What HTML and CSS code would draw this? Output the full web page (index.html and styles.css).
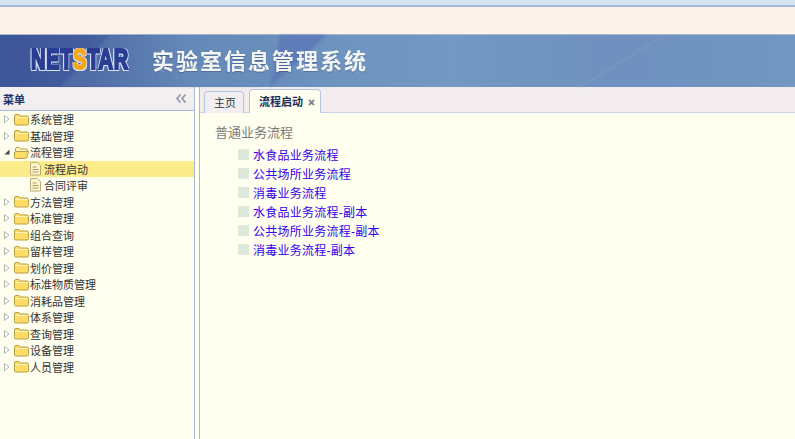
FILE: index.html
```html
<!DOCTYPE html>
<html lang="zh-CN">

<head>
    <meta charset="UTF-8">
    <title>实验室信息管理系统</title>
    <link rel="stylesheet" href="styles.css">
</head>

<body>
    <svg class="sprites" width="0" height="0">
        <defs>
            <path id="right" d="M.5.5 5 4 .5 7.5z" fill="#fff" stroke="#b4b4b4" />
            <g id="shut">
                <path d="M.5 3q0-1.5 1.5-1.5h3l1.200 1.500h6.800q1.500 0 1.500 1.500v6q0 1.500-1.500 1.500h-11q-1.500 0-1.500-1.500z" fill="#ffdc66" stroke="#b9a048" />
                <path d="M1.500 4.500h12" stroke="#fff3bd" fill="none" />
            </g>
            <g id="open">
                <path d="M1.500 11V3q0-1.500 1.500-1.500h2.500l1 1.500h6q1 0 1 1v1.500" fill="#fff3c0" stroke="#b9a048" />
                <path d="M.5 7q0-1.500 1.500-1.500h12.500l-1.500 5.500q-.3 1.500-1.500 1.500h-9.500q-1.500 0-1.500-1.500z" fill="#ffdc66" stroke="#b9a048" />
            </g>
            <g id="page">
                <path d="M1.500.5h7l3 3v9.500h-10z" fill="#fff6c8" stroke="#b8ac80" />
                <path d="M3.500 5h4M3.500 7.500h6M3.500 10h6" stroke="#a89a70" fill="none" />
            </g>
        </defs>
    </svg>
    <div class="topbar"></div>
    <div class="strip"></div>
    <div class="banner">
        <svg class="banner_art" width="795" height="52" viewBox="0 0 795 52">
            <path d="M110 0h170l-20 52H60z" fill="#6c93be" opacity=".3" />
            <path d="M280 0h47L270 52z" fill="#5a74b6" opacity=".7" />
            <path d="M580 52 660 3" stroke="#9db8d8" fill="none" opacity=".45" />
        </svg>
        <div class="logo"><span>NET</span><span class="logo_s">S</span><span>TAR</span></div>
        <div class="title">实验室信息管理系统</div>
    </div>
    <div class="layout">
        <div class="side">
            <div class="side_head">
                <span>菜单</span>
                <svg width="10" height="9" viewBox="0 0 10 9" fill="none" stroke="#8d97a8" stroke-width="1.6">
                    <path d="M4.500.5 1 4.500l3.500 4M9.500.5 6 4.500l3.500 4" />
                </svg>
            </div>
            <ul class="tree">
                <li><svg class="arrow" width="6" height="8" viewBox="0 0 6 8"><use href="#right" /></svg><svg class="folder" width="15" height="13" viewBox="0 0 15 13"><use href="#shut" /></svg><span>系统管理</span></li>
                <li><svg class="arrow" width="6" height="8" viewBox="0 0 6 8"><use href="#right" /></svg><svg class="folder" width="15" height="13" viewBox="0 0 15 13"><use href="#shut" /></svg><span>基础管理</span></li>
                <li><svg class="arrow" width="6" height="8" viewBox="0 0 6 8"><path d="M5.500 1.500v5h-5z" fill="#444" /></svg><svg class="folder" width="15" height="13" viewBox="0 0 15 13"><use href="#open" /></svg><span>流程管理</span></li>
                <li class="leaf active"><svg class="file" width="13" height="14" viewBox="0 0 13 14"><use href="#page" /></svg><span>流程启动</span></li>
                <li class="leaf"><svg class="file" width="13" height="14" viewBox="0 0 13 14"><use href="#page" /></svg><span>合同评审</span></li>
                <li><svg class="arrow" width="6" height="8" viewBox="0 0 6 8"><use href="#right" /></svg><svg class="folder" width="15" height="13" viewBox="0 0 15 13"><use href="#shut" /></svg><span>方法管理</span></li>
                <li><svg class="arrow" width="6" height="8" viewBox="0 0 6 8"><use href="#right" /></svg><svg class="folder" width="15" height="13" viewBox="0 0 15 13"><use href="#shut" /></svg><span>标准管理</span></li>
                <li><svg class="arrow" width="6" height="8" viewBox="0 0 6 8"><use href="#right" /></svg><svg class="folder" width="15" height="13" viewBox="0 0 15 13"><use href="#shut" /></svg><span>组合查询</span></li>
                <li><svg class="arrow" width="6" height="8" viewBox="0 0 6 8"><use href="#right" /></svg><svg class="folder" width="15" height="13" viewBox="0 0 15 13"><use href="#shut" /></svg><span>留样管理</span></li>
                <li><svg class="arrow" width="6" height="8" viewBox="0 0 6 8"><use href="#right" /></svg><svg class="folder" width="15" height="13" viewBox="0 0 15 13"><use href="#shut" /></svg><span>划价管理</span></li>
                <li><svg class="arrow" width="6" height="8" viewBox="0 0 6 8"><use href="#right" /></svg><svg class="folder" width="15" height="13" viewBox="0 0 15 13"><use href="#shut" /></svg><span>标准物质管理</span></li>
                <li><svg class="arrow" width="6" height="8" viewBox="0 0 6 8"><use href="#right" /></svg><svg class="folder" width="15" height="13" viewBox="0 0 15 13"><use href="#shut" /></svg><span>消耗品管理</span></li>
                <li><svg class="arrow" width="6" height="8" viewBox="0 0 6 8"><use href="#right" /></svg><svg class="folder" width="15" height="13" viewBox="0 0 15 13"><use href="#shut" /></svg><span>体系管理</span></li>
                <li><svg class="arrow" width="6" height="8" viewBox="0 0 6 8"><use href="#right" /></svg><svg class="folder" width="15" height="13" viewBox="0 0 15 13"><use href="#shut" /></svg><span>查询管理</span></li>
                <li><svg class="arrow" width="6" height="8" viewBox="0 0 6 8"><use href="#right" /></svg><svg class="folder" width="15" height="13" viewBox="0 0 15 13"><use href="#shut" /></svg><span>设备管理</span></li>
                <li><svg class="arrow" width="6" height="8" viewBox="0 0 6 8"><use href="#right" /></svg><svg class="folder" width="15" height="13" viewBox="0 0 15 13"><use href="#shut" /></svg><span>人员管理</span></li>
            </ul>
        </div>
        <div class="main">
            <ul class="tabs">
                <li>主页</li>
                <li class="active">流程启动<svg width="7" height="7" viewBox="0 0 7 7" stroke="#85858c" stroke-width="1.8"><path d="M1 1l5 5M6 1 1 6" /></svg></li>
            </ul>
            <div class="content">
                <h3>普通业务流程</h3>
                <ul class="flows">
                    <li><i></i><a>水食品业务流程</a></li>
                    <li><i></i><a>公共场所业务流程</a></li>
                    <li><i></i><a>消毒业务流程</a></li>
                    <li><i></i><a>水食品业务流程-副本</a></li>
                    <li><i></i><a>公共场所业务流程-副本</a></li>
                    <li><i></i><a>消毒业务流程-副本</a></li>
                </ul>
            </div>
        </div>
    </div>
</body>

</html>
```

FILE: styles.css
```css
* {
    margin: 0;
    padding: 0;
    list-style: none;
    box-sizing: border-box;
}

html,
body {
    height: 100%;
    overflow: hidden;
}

body {
    display: flex;
    flex-direction: column;
    font: 11px "Liberation Sans", "Noto Sans CJK SC", sans-serif;
    color: #333;
    background-color: #fffff0;
}

.sprites {
    position: absolute;
}

.topbar {
    height: 7px;
    background-color: #d6e5f5;
    border-bottom: 2px solid #a3b8d6;
}

.strip {
    height: 27px;
    background-color: #fbf2ea;
}

.banner {
    position: relative;
    display: flex;
    align-items: center;
    height: 53px;
    padding: 0 0 4px 31px;
    background: linear-gradient(90deg, #3d5599 0, #445d9e 90px, #6286b6 190px, #6d93bf 330px, #7398c2 450px, #6f90bf 620px, #7197c2 795px);
    border-top: 1px solid #a9b7d2;
}

.banner_art {
    position: absolute;
    top: 0;
    left: 0;
    filter: blur(1px);
}

.logo {
    position: relative;
    display: flex;
    flex: none;
    width: 98px;
    font: bold 29px/29px "Liberation Sans", sans-serif;
    letter-spacing: 1px;
    color: #2a3d94;
    -webkit-text-stroke: 2.2px #2a3d94;
    text-shadow: 2px 0 #dbe3f3, -2px 0 #dbe3f3, 0 1.5px #dbe3f3, 0 -1.5px #dbe3f3, 2px 1.5px #dbe3f3, -2px -1.5px #dbe3f3, 2px -1.5px #dbe3f3, -2px 1.5px #dbe3f3;
    transform: scaleX(.69);
    transform-origin: left center;
}

.logo_s {
    color: #f2a81d;
    -webkit-text-stroke: 2.2px #f2a81d;
}

.title {
    position: relative;
    flex: none;
    margin-left: 23px;
    font: bold 22px/26px "Noto Sans CJK SC", sans-serif;
    letter-spacing: 2px;
    color: #f4f6f4;
    text-shadow: 0 1px 1px rgba(50, 70, 120, .5);
    -webkit-box-reflect: below -7px linear-gradient(transparent 68%, rgba(255, 255, 255, .35));
}

.layout {
    flex: 1;
    display: flex;
    min-height: 0;
}

.side {
    width: 195px;
    border-right: 1px solid #a9b9da;
}

.side_head {
    display: flex;
    justify-content: space-between;
    align-items: center;
    height: 24px;
    padding: 0 8px 0 3px;
    font-weight: bold;
    color: #1c3268;
    background: linear-gradient(#f5f0f0, #f1ecee);
    border-bottom: 1px solid #a9b9da;
}

.tree li {
    display: flex;
    align-items: center;
    height: 16.5px;
    padding-left: 4px;
    white-space: nowrap;
}

.tree .leaf {
    padding-left: 29px;
}

.tree .active {
    background-color: #fdec8c;
}

.arrow {
    flex: none;
    margin-right: 4px;
}

.folder {
    flex: none;
    margin-right: 1px;
}

.file {
    flex: none;
    margin-right: 2px;
}

.main {
    flex: 1;
    margin-left: 4px;
    border-left: 1px solid #a9b9da;
}

.tabs {
    display: flex;
    align-items: flex-end;
    gap: 5px;
    height: 26px;
    padding-left: 4px;
    background-color: #f2ecee;
    border-bottom: 1px solid #c9d3e6;
}

.tabs li {
    height: 22px;
    margin-bottom: -1px;
    padding: 0 7px 0 9px;
    line-height: 23px;
    background-color: #f2eeef;
    border: 1px solid #b4c3df;
    border-bottom: 0;
    border-radius: 4px 4px 0 0;
}

.tabs .active {
    height: 24px;
    padding: 0 5px 0 9px;
    line-height: 24px;
    font-weight: bold;
    color: #1c2f5c;
    background-color: #fffff0;
}

.tabs svg {
    margin-left: 5px;
}

.content {
    padding: 11px 15px;
}

.content h3 {
    font-size: 13px;
    font-weight: normal;
    line-height: 17px;
    color: #7a7a7a;
}

.flows {
    margin-top: 4px;
    padding-left: 23px;
    font-size: 12px;
    letter-spacing: .25px;
}

.flows li {
    display: flex;
    align-items: center;
    height: 19px;
}

.flows i {
    width: 11px;
    height: 11px;
    margin-right: 4px;
    background-color: #dfe9db;
}

.flows a {
    color: #3300ee;
}
```
